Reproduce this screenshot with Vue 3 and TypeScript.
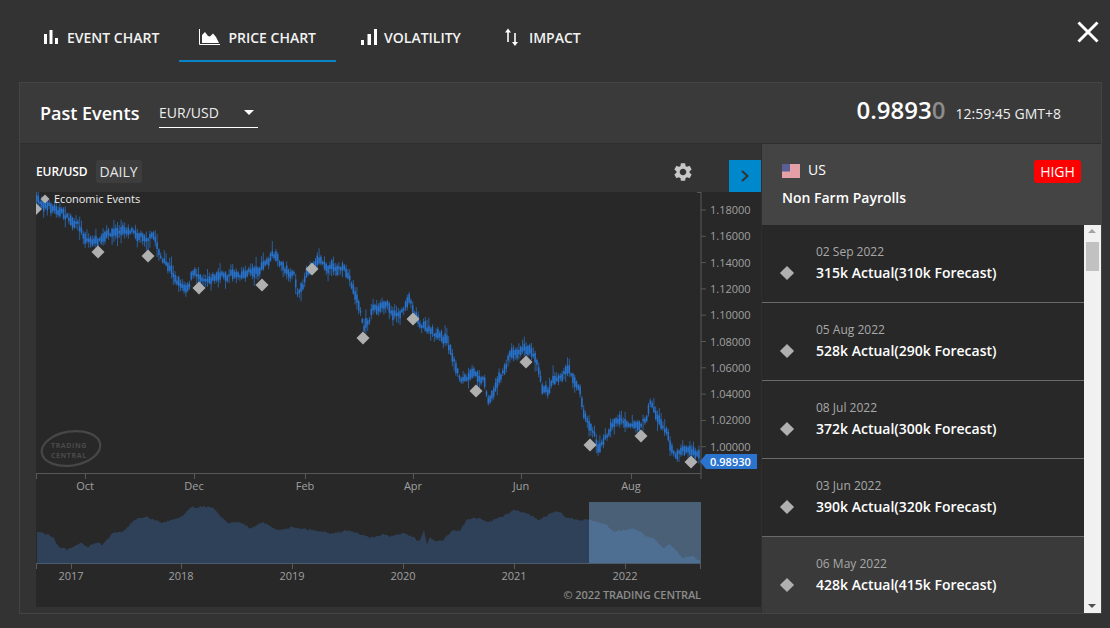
<script setup lang="ts">
type Pt = [number, number];

const tabs = [
  { label: 'EVENT CHART', icon: 'event', active: false },
  { label: 'PRICE CHART', icon: 'area', active: true },
  { label: 'VOLATILITY', icon: 'vol', active: false },
  { label: 'IMPACT', icon: 'impact', active: false },
];

const rows = [
  { date: '02 Sep 2022', text: '315k Actual(310k Forecast)', active: false },
  { date: '05 Aug 2022', text: '528k Actual(290k Forecast)', active: false },
  { date: '08 Jul 2022', text: '372k Actual(300k Forecast)', active: false },
  { date: '03 Jun 2022', text: '390k Actual(320k Forecast)', active: false },
  { date: '06 May 2022', text: '428k Actual(415k Forecast)', active: true },
];

const pricePts: Pt[] = [
  [36, 201], [44, 204], [52, 208], [58, 209], [66, 216], [72, 222], [78, 226], [84, 236], [90, 240], [97, 243],
  [104, 239], [112, 233], [122, 232], [133, 228], [138, 233], [146, 236], [154, 237], [158, 248], [163, 262], [170, 270],
  [177, 280], [184, 286], [189, 284], [192, 273], [198, 276], [208, 277], [216, 276], [226, 276], [236, 273], [246, 272],
  [258, 270], [268, 262], [273, 255], [278, 262], [286, 270], [294, 276], [298, 294], [302, 290], [307, 270], [314, 262],
  [320, 258], [330, 266], [342, 268], [350, 280], [358, 302], [364, 328], [369, 320], [373, 306], [380, 310], [388, 304],
  [394, 314], [402, 312], [409, 296], [414, 310], [420, 322], [428, 330], [436, 336], [446, 340], [453, 358], [460, 378],
  [468, 379], [476, 374], [484, 378], [488, 398], [494, 392], [498, 378], [504, 372], [510, 354], [516, 352], [523, 347],
  [530, 351], [536, 354], [540, 372], [543, 388], [548, 392], [553, 378], [560, 374], [568, 370], [574, 378], [580, 390],
  [583, 412], [588, 422], [594, 432], [598, 446], [604, 442], [609, 432], [615, 420], [624, 420], [632, 422], [640, 426],
  [646, 418], [651, 402], [656, 414], [661, 424], [666, 430], [670, 444], [676, 453], [684, 450], [690, 450], [697, 456],
  [700, 458],
];

const miniPts: Pt[] = [
  [37, 532], [45, 533], [53, 537], [58, 546], [67, 550], [80, 543], [88, 547], [97, 542], [102, 545], [113, 533],
  [123, 532], [135, 519], [147, 517], [163, 523], [173, 519], [183, 516], [190, 507], [213, 507], [227, 523], [240, 522],
  [250, 528], [262, 522], [277, 530], [293, 527], [313, 530], [330, 533], [340, 532], [347, 530], [360, 534], [373, 538],
  [383, 534], [390, 537], [403, 533], [413, 537], [419, 542], [424, 530], [427, 545], [430, 537], [435, 541], [443, 541],
  [452, 530], [460, 531], [467, 519], [477, 518], [487, 522], [497, 519], [515, 510], [527, 514], [540, 520], [547, 515],
  [558, 511], [567, 518], [580, 520], [588, 519], [607, 525], [613, 532], [635, 528], [647, 537], [652, 537], [663, 548],
  [670, 544], [683, 558], [693, 555], [701, 562],
];

function interp(pts: Pt[], x: number): number {
  if (x <= pts[0][0]) return pts[0][1];
  for (let i = 1; i < pts.length; i++) {
    if (x <= pts[i][0]) {
      const [x0, y0] = pts[i - 1];
      const [x1, y1] = pts[i];
      return y0 + ((y1 - y0) * (x - x0)) / (x1 - x0);
    }
  }
  return pts[pts.length - 1][1];
}

let seed = 7;
function rnd(): number {
  seed = (seed * 16807) % 2147483647;
  return seed / 2147483647;
}

let wicks = '';
let bodies = '';
let drift = 0;
for (let x = 36.5; x < 700; x += 1.8) {
  drift = drift * 0.6 + (rnd() - 0.5) * 5.5;
  const y = interp(pricePts, x) + drift;
  const up = 1 + rnd() * rnd() * 10;
  const dn = 1 + rnd() * rnd() * 10;
  const b = 1 + rnd() * 4;
  wicks += `M${x.toFixed(1)} ${(y - up - b).toFixed(1)}V${(y + dn + b).toFixed(1)}`;
  bodies += `M${x.toFixed(1)} ${(y - b).toFixed(1)}V${(y + b).toFixed(1)}`;
}

let mini = 'M37 563';
for (let x = 37; x <= 700; x += 1.5) {
  mini += `L${x} ${(interp(miniPts, x) + (rnd() - 0.5) * 2).toFixed(1)}`;
}
mini += 'L700 563Z';

const diamonds: Pt[] = [
  [98, 252], [148, 256], [199, 288], [262, 285], [312, 269], [363, 338],
  [413, 319], [476, 391], [526, 362], [590, 445], [641, 436], [691, 462],
];

const prices = ['1.18000', '1.16000', '1.14000', '1.12000', '1.10000', '1.08000', '1.06000', '1.04000', '1.02000', '1.00000'];
const priceY = prices.map((p, i) => ({ p, y: 210 + i * 26.3 }));
const months: [string, number][] = [['Oct', 85], ['Dec', 194], ['Feb', 305], ['Apr', 413], ['Jun', 521], ['Aug', 631]];
const years: [string, number][] = [['2017', 71], ['2018', 181], ['2019', 292], ['2020', 403], ['2021', 514], ['2022', 625]];

function dia(x: number, y: number, r: number): string {
  return `${x},${y - r} ${x + r},${y} ${x},${y + r} ${x - r},${y}`;
}
</script>

<template>
  <div class="page">
    <nav class="tabs">
      <div v-for="t in tabs" :key="t.label" class="tab" :class="[`tab-${t.icon}`, { active: t.active }]">
        <svg class="tab-icon" :width="t.icon === 'event' ? 16 : 20" height="20" :viewBox="t.icon === 'event' ? '0 0 16 20' : '0 0 20 20'">
          <g v-if="t.icon === 'event'" fill="#fff">
            <rect x="0" y="6" width="3" height="10" />
            <rect x="5.5" y="2" width="3" height="14" />
            <rect x="11" y="10" width="3" height="6" />
          </g>
          <g v-else-if="t.icon === 'area'">
            <path d="M-0.5 1V16.5H20" fill="none" stroke="#fff" stroke-width="1" />
            <path d="M2 15V7L5 4L8 8L10 8.5L13 5.5L16 9L19 15Z" fill="#fff" />
          </g>
          <g v-else-if="t.icon === 'vol'" fill="#fff">
            <rect x="4" y="12" width="3" height="5" />
            <rect x="10.5" y="6" width="3.5" height="11" />
            <rect x="17" y="1" width="3" height="16" />
          </g>
          <g v-else fill="none" stroke="#fff" stroke-width="1.6">
            <path d="M6 3V14" />
            <path d="M13 5V15" />
            <path d="M3 4.5L6 0.5L9 4.5Z" fill="#fff" stroke="none" />
            <path d="M10 14L13 18L16 14Z" fill="#fff" stroke="none" />
          </g>
        </svg>
        <span>{{ t.label }}</span>
      </div>
      <svg class="close" width="22" height="22" viewBox="0 0 22 22">
        <path d="M1.5 1.5L20.5 20.5M20.5 1.5L1.5 20.5" stroke="#fff" stroke-width="3" fill="none" />
      </svg>
    </nav>

    <section class="panel">
      <header class="panel-head">
        <h1>Past Events</h1>
        <div class="select">
          <span>EUR/USD</span>
          <i class="caret"></i>
        </div>
        <div class="quote">
          <span class="price">0.9893<em>0</em></span>
          <span class="time">12:59:45 GMT+8</span>
        </div>
      </header>

      <div class="body">
        <div class="chart-col">
          <div class="toolbar">
            <span class="sym">EUR/USD</span>
            <span class="period">DAILY</span>
            <svg class="gear" width="22" height="22" viewBox="0 0 24 24">
              <path fill="#c8c8c8" d="M19.14 12.94c.04-.3.06-.61.06-.94 0-.32-.02-.64-.07-.94l2.03-1.58c.18-.14.23-.41.12-.61l-1.92-3.32c-.12-.22-.37-.29-.59-.22l-2.39.96c-.5-.38-1.03-.7-1.62-.94l-.36-2.54c-.04-.24-.24-.41-.48-.41h-3.84c-.24 0-.43.17-.47.41l-.36 2.54c-.59.24-1.13.57-1.62.94l-2.39-.96c-.22-.08-.47 0-.59.22L2.74 8.87c-.12.21-.08.47.12.61l2.03 1.58c-.05.3-.09.63-.09.94s.02.64.07.94l-2.03 1.58c-.18.14-.23.41-.12.61l1.92 3.32c.12.22.37.29.59.22l2.39-.96c.5.38 1.03.7 1.62.94l.36 2.54c.05.24.24.41.48.41h3.84c.24 0 .44-.17.47-.41l.36-2.54c.59-.24 1.13-.56 1.62-.94l2.39.96c.22.08.47 0 .59-.22l1.92-3.32c.12-.22.07-.47-.12-.61l-2.01-1.58zM12 15.6c-1.98 0-3.6-1.62-3.6-3.6s1.62-3.6 3.6-3.6 3.6 1.62 3.6 3.6-1.62 3.6-3.6 3.6z" />
            </svg>
            <div class="expand">
              <svg width="10" height="14" viewBox="0 0 10 14">
                <path d="M2 2L7.5 7L2 12" fill="none" stroke="#333" stroke-width="2" />
              </svg>
            </div>
          </div>

          <svg class="chart" width="725" height="415" viewBox="36 192 725 415">
            <defs>
              <clipPath id="plot"><rect x="36" y="192" width="665" height="281" /></clipPath>
            </defs>

            <ellipse cx="71" cy="448.5" rx="29.5" ry="17" fill="none" stroke="#474747" stroke-width="2.2" transform="rotate(-9 71 448.5)" />
            <text class="logo"><tspan x="51" y="448">TRADING</tspan><tspan x="51" y="457.5">CENTRAL</tspan></text>

            <g clip-path="url(#plot)">
              <path :d="wicks" stroke="#2a5f9f" stroke-width="1" fill="none" />
              <path :d="bodies" stroke="#2672cc" stroke-width="1.5" fill="none" />
              <polygon :points="dia(36, 209, 6)" fill="#b0b0b0" />
            </g>

            <polygon v-for="d in diamonds" :key="d[0]" :points="dia(d[0], d[1], 6.5)" fill="#b0b0b0" />
            <polygon :points="dia(45, 199, 4.5)" fill="#b0b0b0" />
            <text x="54" y="203" class="legend">Economic Events</text>

            <!-- price axis -->
            <path d="M701 192V479" stroke="#585858" fill="none" />
            <path d="M697 192.5H701" stroke="#585858" fill="none" />
            <g v-for="t in priceY" :key="t.p">
              <path :d="`M701 ${t.y}H706`" stroke="#585858" fill="none" />
              <text x="710" :y="t.y + 4" class="axis">{{ t.p }}</text>
            </g>

            <!-- time axis -->
            <path d="M36 473.5H701" stroke="#585858" fill="none" />
            <path d="M36.5 473V479" stroke="#585858" fill="none" />
            <g v-for="m in months" :key="m[0]">
              <path :d="`M${m[1]}.5 473V479`" stroke="#585858" fill="none" />
              <text :x="m[1]" y="490" class="axis mid">{{ m[0] }}</text>
            </g>

            <!-- last price -->
            <path d="M700 461.5L706 454H757V469H706Z" fill="#2a74d0" />
            <text x="710" y="465.5" class="tag">0.98930</text>

            <!-- navigator -->
            <path :d="mini" fill="#2f4158" />
            <rect x="589" y="502" width="112" height="61" fill="#7cb5ec" fill-opacity=".4" />
            <path d="M36 563.5H701" stroke="#4b5a6c" fill="none" />
            <path d="M36.5 563V569M700.5 563V569" stroke="#585858" fill="none" />
            <g v-for="y in years" :key="y[0]">
              <path :d="`M${y[1]}.5 563V569`" stroke="#585858" fill="none" />
              <text :x="y[1]" y="580" class="axis mid">{{ y[0] }}</text>
            </g>
            <text x="701" y="599" class="copy">© 2022 TRADING CENTRAL</text>
          </svg>
        </div>

        <aside class="side">
          <div class="side-head">
            <div class="country">
              <svg class="flag" width="18" height="14" viewBox="0 0 18 14">
                <rect width="18" height="14" fill="#eee" />
                <path d="M0 1H18M0 3H18M0 5H18M0 7H18M0 9H18M0 11H18M0 13H18" stroke="#d9525e" stroke-width="1" />
                <rect width="8" height="7.5" fill="#5b5f96" />
              </svg>
              <span class="cc">US</span>
              <b class="high">HIGH</b>
            </div>
            <div class="event-name">Non Farm Payrolls</div>
          </div>
          <div class="list-wrap">
            <ul class="list">
              <li v-for="r in rows" :key="r.date" class="row" :class="{ active: r.active }">
                <i class="diamond"></i>
                <div class="row-text">
                  <div class="date">{{ r.date }}</div>
                  <div class="val">{{ r.text }}</div>
                </div>
              </li>
            </ul>
            <div class="scroll">
              <i class="arrow up"></i>
              <i class="thumb"></i>
              <i class="arrow down"></i>
            </div>
          </div>
        </aside>
      </div>
    </section>
  </div>
</template>

<style>
html, body { margin: 0; background: #333; }
</style>

<style scoped>
.page {
  width: 1110px;
  height: 628px;
  overflow: hidden;
  background: #333;
  color: #fff;
  font-family: "Open Sans", "Liberation Sans", sans-serif;
  position: relative;
}
.tabs {
  display: flex;
  height: 62px;
  padding-left: 23px;
  margin-bottom: 20px;
  box-sizing: border-box;
  position: relative;
}
.tab {
  display: flex;
  align-items: flex-start;
  gap: 7px;
  padding: 28px 20px 0 21px;
  font-size: 14px;
  font-weight: 600;
  height: 62px;
  box-sizing: border-box;
  color: #f2f2f2;
}
.tab span { line-height: 20px; }
.tab-area { gap: 8px; }
.tab.active { border-bottom: 2px solid #0a84c8; }
.tab-icon { flex: none; overflow: visible; }
.close { position: absolute; left: 1077px; top: 21px; }

.panel {
  margin-left: 19px;
  width: 1083px;
  height: 532px;
  box-sizing: border-box;
  border: 1px solid #444;
  background: #333;
  display: flex;
  flex-direction: column;
}
.panel-head {
  flex: none;
  height: 61px;
  box-sizing: border-box;
  border-bottom: 1px solid #2e2e2e;
  background: #3a3a3a;
  display: flex;
  align-items: center;
  padding: 0 40px 0 20px;
}
.panel-head h1 {
  margin: 0 19px 0 0;
  font-size: 18px;
  font-weight: 600;
  width: 100px;
  white-space: nowrap;
}
.select {
  width: 99px;
  height: 30px;
  box-sizing: border-box;
  border-bottom: 1px solid #fff;
  font-size: 14px;
  display: flex;
  align-items: center;
  justify-content: space-between;
  padding-right: 4px;
  color: #eee;
}
.caret {
  width: 0;
  height: 0;
  border: 5px solid transparent;
  border-top: 5px solid #fff;
  border-bottom: 0;
}
.quote {
  margin-left: auto;
  margin-bottom: 6px;
  display: flex;
  align-items: baseline;
  gap: 10px;
}
.price { font-size: 24px; font-weight: 600; line-height: 30px; }
.price em { font-style: normal; color: #8c8c8c; }
.time { font-size: 14px; color: #eee; }

.body { flex: 1; display: flex; min-height: 0; }
.chart-col {
  width: 741px;
  flex: none;
  background: #333;
  padding-left: 16px;
  box-sizing: border-box;
}
.toolbar {
  height: 48px;
  display: flex;
  align-items: flex-start;
  position: relative;
}
.sym {
  font-size: 12px;
  font-weight: 600;
  margin-top: 20px;
  line-height: 16px;
  letter-spacing: -0.1px;
}
.period {
  margin: 16px 0 0 8px;
  height: 23px;
  line-height: 23px;
  padding: 0 4px;
  font-size: 14px;
  background: #3d3d3d;
  border-radius: 3px;
  color: #e6e6e6;
}
.gear { position: absolute; left: 636px; top: 17px; }
.expand {
  position: absolute;
  right: 0;
  bottom: 0;
  width: 32px;
  height: 32px;
  background: #0088cc;
  display: flex;
  align-items: center;
  justify-content: center;
}
.chart { display: block; background: #282828; }
.logo { font-size: 7px; font-weight: 700; letter-spacing: .6px; fill: #4a4a4a; }
.legend { font-size: 11px; fill: #eee; }
.axis { font-size: 11px; fill: #a0a0a0; }
.axis.mid { text-anchor: middle; }
.tag { font-size: 11px; fill: #fff; font-weight: 600; }
.copy { font-size: 11px; font-weight: 600; fill: #8c8c8c; text-anchor: end; letter-spacing: -.1px; }

.side { flex: 1; min-width: 0; display: flex; flex-direction: column; border-left: 1px solid #2e2e2e; }
.side-head {
  height: 81px;
  flex: none;
  background: #444;
  box-sizing: border-box;
  padding: 16px 20px 0 20px;
}
.country {
  display: flex;
  align-items: center;
  height: 23px;
  font-size: 14px;
  gap: 8px;
}
.flag { margin-top: -1px; }
.cc { margin-top: -4px; }
.high {
  margin-left: auto;
  width: 47px;
  height: 23px;
  line-height: 23px;
  text-align: center;
  background: #f00;
  border-radius: 3px;
  font-size: 14px;
  font-weight: 400;
}
.event-name { font-size: 14px; font-weight: 600; margin-top: 4px; line-height: 22px; }
.list-wrap { flex: 1; display: flex; min-height: 0; }
.list { flex: 1; margin: 0; padding: 0; list-style: none; overflow: hidden; }
.row {
  height: 78px;
  box-sizing: border-box;
  border-bottom: 1px solid #6a6a6a;
  background: #282828;
  display: flex;
  align-items: center;
  padding-left: 19px;
}
.row.active { background: #3a3a3a; border-bottom: 0; }
.row-text { margin-top: -2px; }
.diamond {
  width: 10px;
  height: 10px;
  margin: 18px 24px 0 1px;
  background: #b0b0b0;
  transform: rotate(45deg);
  flex: none;
}
.date { font-size: 12px; color: #a8a8a8; line-height: 20px; }
.val { font-size: 14px; font-weight: 600; line-height: 22px; }
.scroll {
  width: 17px;
  flex: none;
  background: #f1f1f1;
  position: relative;
}
.thumb {
  position: absolute;
  left: 2px;
  top: 17px;
  width: 13px;
  height: 29px;
  background: #c1c1c1;
}
.arrow { position: absolute; left: 4px; width: 0; height: 0; border: 4px solid transparent; }
.arrow.up { top: 4px; border-bottom-color: #a3a3a3; border-top: 0; }
.arrow.down { bottom: 5px; border-top-color: #505050; border-bottom: 0; }
</style>
